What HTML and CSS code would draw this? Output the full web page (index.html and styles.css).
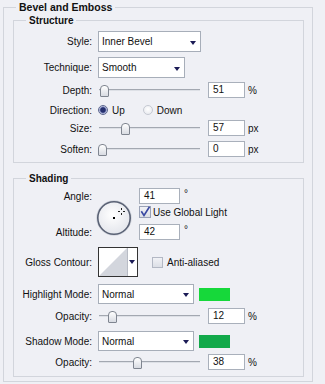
FILE: index.html
```html
<!DOCTYPE html>
<html>
<head>
<meta charset="utf-8">
<title>Bevel and Emboss</title>
<link rel="stylesheet" href="styles.css">
</head>
<body>
<fieldset class="group outer">
  <legend class="title title-main">Bevel and Emboss</legend>
  <div class="outer-body">
    <fieldset class="group">
      <legend class="title title-sub">Structure</legend>
      <div class="structure-body">
        <div class="row"><span class="lbl">Style:</span><div class="select style-sel">Inner Bevel<i class="arrow"></i></div></div>
        <div class="row mt5"><span class="lbl">Technique:</span><div class="select tech-sel">Smooth<i class="arrow"></i></div></div>
        <div class="row mt4"><span class="lbl">Depth:</span><div class="slider"><div class="track"></div><div class="thumb" style="--v:.025"></div></div><div class="num">51</div><span class="unit">%</span></div>
        <div class="row mt5 dir"><span class="lbl">Direction:</span><span class="radio on"></span><span class="rtext up">Up</span><span class="radio"></span><span class="rtext">Down</span></div>
        <div class="row mt3"><span class="lbl">Size:</span><div class="slider"><div class="track"></div><div class="thumb" style="--v:.25"></div></div><div class="num">57</div><span class="unit">px</span></div>
        <div class="row mt5"><span class="lbl">Soften:</span><div class="slider"><div class="track"></div><div class="thumb" style="--v:0"></div></div><div class="num">0</div><span class="unit">px</span></div>
      </div>
    </fieldset>
    <fieldset class="group shading">
      <legend class="title title-sub">Shading</legend>
      <div class="shading-body">
        <div class="angle">
          <span class="lbl g-r1">Angle:</span>
          <svg class="dial" width="36" height="36" viewBox="0 0 36 36">
            <defs>
              <radialGradient id="dg" cx="45%" cy="40%" r="60%">
                <stop offset="0" stop-color="#ffffff"/>
                <stop offset="1" stop-color="#e4e6ec"/>
              </radialGradient>
            </defs>
            <circle cx="18" cy="18" r="17.3" fill="none" stroke="#d3d6de" stroke-width="1"/>
            <circle cx="18" cy="18" r="16.2" fill="url(#dg)" stroke="#596174" stroke-width="1.6"/>
            <rect x="17" y="17" width="2" height="2" fill="#000"/>
            <g fill="#222">
              <rect x="22" y="11" width="2" height="1"/>
              <rect x="27" y="11" width="2" height="1"/>
              <rect x="25" y="8" width="1" height="2"/>
              <rect x="25" y="13" width="1" height="2"/>
            </g>
          </svg>
          <div class="a-in g-r1"><div class="num w41">41</div><span class="deg">°</span></div>
          <div class="chkrow g-r2"><span class="cb checked"><svg width="12" height="12" viewBox="0 0 12 12"><polyline points="2.3,5.2 5,9.5 10.5,0.8" fill="none" stroke="#3a49a2" stroke-width="1.6"/></svg></span><span class="cbtext">Use Global Light</span></div>
          <span class="lbl g-r3">Altitude:</span>
          <div class="a-in g-r3"><div class="num w41">42</div><span class="deg">°</span></div>
        </div>
        <div class="row mt7"><span class="lbl">Gloss Contour:</span><div class="contour"><svg width="28" height="28" viewBox="0 0 28 28"><polygon points="0,28 28,0 28,28" fill="#d3d6dd"/></svg><span class="c-arrow"><i class="arrow"></i></span></div><span class="cb aa"></span><span class="cbtext">Anti-aliased</span></div>
        <div class="row mt7"><span class="lbl">Highlight Mode:</span><div class="select mode-sel">Normal<i class="arrow"></i></div><span class="swatch hl"></span></div>
        <div class="row mt4"><span class="lbl">Opacity:</span><div class="slider"><div class="track"></div><div class="thumb" style="--v:.11"></div></div><div class="num">12</div><span class="unit">%</span></div>
        <div class="row mt7"><span class="lbl">Shadow Mode:</span><div class="select mode-sel">Normal<i class="arrow"></i></div><span class="swatch sh"></span></div>
        <div class="row mt3"><span class="lbl">Opacity:</span><div class="slider"><div class="track"></div><div class="thumb" style="--v:.376"></div></div><div class="num">38</div><span class="unit">%</span></div>
      </div>
    </fieldset>
  </div>
</fieldset>
</body>
</html>
```
FILE: styles.css
```css
* { box-sizing: border-box; }
html, body { margin: 0; }
body {
  background: #eff0f5;
  font: 10px "Liberation Sans", Arial, sans-serif;
  color: #111;
  padding-left: 3px;
  width: 325px;
  height: 384px;
  overflow: hidden;
}
.group {
  margin: 0;
  padding: 0;
  border: 1px solid #d2d5dc;
  min-width: 0;
}
.outer { width: 310px; }
.outer-body { padding: 0 8px 4px 9px; }
.title {
  margin-left: 12px;
  padding: 0 3px;
  font-weight: bold;
}
.title-main { font-size: 10.5px; line-height: 15px; }
.title-sub { line-height: 11px; }
.structure-body { padding: 5px 0 5px 0; }
.shading { margin-top: 10px; }
.shading-body { padding: 4px 0 6px 0; }

.row { display: flex; align-items: center; }
.mt3 { margin-top: 3px; }
.mt4 { margin-top: 4px; }
.mt5 { margin-top: 5px; }
.mt7 { margin-top: 7px; }
.lbl {
  width: 78px;
  flex: none;
  text-align: right;
  margin-right: 6px;
  white-space: nowrap;
}

.select {
  position: relative;
  background: #fff;
  border: 1px solid #a7aeb9;
  padding-left: 3px;
  white-space: nowrap;
}
.style-sel { width: 103px; height: 21px; line-height: 19px; }
.tech-sel { width: 87px; height: 21px; line-height: 19px; }
.mode-sel { width: 96px; height: 20px; line-height: 19px; }
.arrow {
  position: absolute;
  right: 4px;
  top: calc(50% - 1px);
  width: 0;
  height: 0;
  border-left: 3px solid transparent;
  border-right: 3px solid transparent;
  border-top: 4px solid #1b1b56;
}

.slider {
  position: relative;
  width: 102px;
  height: 16px;
  margin-right: 8px;
  flex: none;
}
.track {
  position: absolute;
  left: 1px;
  right: 0;
  top: 7px;
  height: 2px;
  border-top: 1px solid #a3a8b1;
  border-bottom: 1px solid #dde0e6;
}
.thumb {
  position: absolute;
  top: 3px;
  left: calc(var(--v) * (100% - 9px));
  width: 9px;
  height: 12px;
  border: 1px solid #7f8590;
  border-radius: 4px 4px 1px 1px;
  background: linear-gradient(#ffffff, #d8dbe2);
}
.num {
  width: 37px;
  height: 16px;
  line-height: 14px;
  background: #fff;
  border: 1px solid #a9b0bb;
  padding-left: 4px;
  flex: none;
}
.w41 { width: 41px; }
.unit { margin-left: 3px; }

.dir { height: 14px; }
.radio {
  width: 10px;
  height: 10px;
  border-radius: 50%;
  border: 1px solid #c5c9d2;
  background: radial-gradient(circle at 50% 40%, #ffffff, #e4e6ec);
  flex: none;
}
.radio.on {
  border-color: #5d6790;
  background: radial-gradient(circle, #25306f 0 2.3px, #7983b8 3px, #e2e5f2 4.2px);
}
.rtext { margin-left: 4px; }
.rtext.up { margin-right: 18px; }

.angle {
  display: grid;
  grid-template-columns: 78px 35px 1fr;
  grid-template-rows: 16px 20px 16px;
  column-gap: 6px;
  align-items: center;
}
.angle .lbl { margin-right: 0; grid-column: 1; }
.g-r1 { grid-row: 1; }
.g-r2 { grid-row: 2; }
.g-r3 { grid-row: 3; }
.dial {
  grid-column: 2;
  grid-row: 1 / 4;
  align-self: start;
  margin-top: 12px;
  margin-left: -2px;
  display: block;
}
.a-in { grid-column: 3; display: flex; align-items: center; }
.deg { margin-left: 4px; align-self: flex-start; line-height: 12px; }
.chkrow { grid-column: 3; display: flex; align-items: center; align-self: start; margin-top: 2px; }

.cb {
  width: 12px;
  height: 12px;
  border: 1px solid #b3b8c4;
  background: linear-gradient(#f1f2f6, #dcdfe6);
  flex: none;
  position: relative;
}
.cb svg { position: absolute; left: -1px; top: -1px; }
.cb.checked { border-color: #9aa2b6; }
.cbtext { margin-left: 2px; white-space: nowrap; }
.cb.aa { width: 11px; height: 11px; margin-left: 14px; }
.cb.aa + .cbtext { margin-left: 4px; }

.contour {
  display: flex;
  width: 40px;
  height: 30px;
  border: 1px solid #333;
  background: #fff;
  flex: none;
}
.contour svg { display: block; }
.c-arrow {
  position: relative;
  flex: 1;
  border-left: 1px solid #b8bcc5;
}
.c-arrow .arrow { right: auto; left: 1px; top: 12px; }

.swatch {
  width: 31px;
  height: 13px;
  margin-left: 5px;
  flex: none;
}
.swatch.hl { background: #16d83a; }
.swatch.sh { background: #12a94a; }
```
